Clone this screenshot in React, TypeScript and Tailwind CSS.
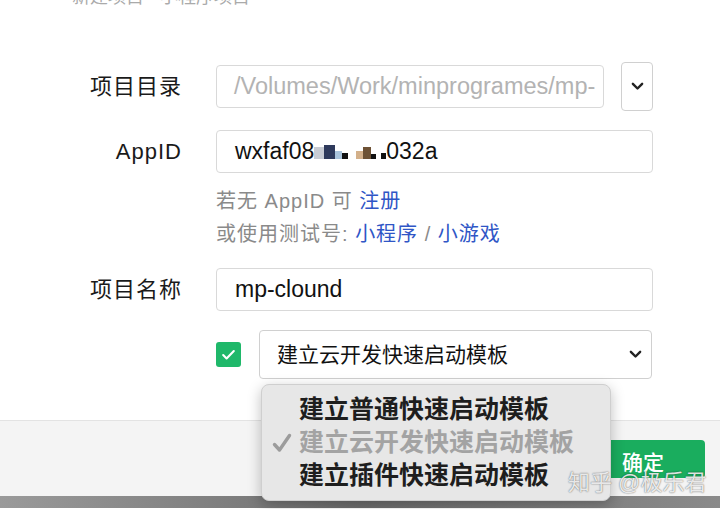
import React from 'react';

const cjk = '"Liberation Sans", "Noto Sans CJK SC", sans-serif';

function Chevron({ className = '' }: { className?: string }) {
  return (
    <svg viewBox="0 0 14 9" className={className} fill="none">
      <path d="M2 2l5 5 5-5" stroke="#222" strokeWidth="2.6" strokeLinecap="round" strokeLinejoin="round" />
    </svg>
  );
}

function Label({ children }: { children: React.ReactNode }) {
  return (
    <div className="w-[182px] shrink-0 text-right text-[22px] tracking-[1px] text-[#1a1a1a]">{children}</div>
  );
}

export default function App() {
  const menuItems = [
    { text: '建立普通快速启动模板', checked: false },
    { text: '建立云开发快速启动模板', checked: true },
    { text: '建立插件快速启动模板', checked: false },
  ];

  return (
    <div className="relative h-[509px] w-[720px] overflow-hidden bg-white" style={{ fontFamily: cjk }}>
      {/* cut-off heading */}
      <div className="flex h-[6px] items-end overflow-hidden pl-[72px]">
        <div className="text-[18px] leading-[18px] text-[#aaa]">新建项目 · 小程序项目</div>
      </div>

      <div className="flex flex-col pt-[56px]">
        <div className="flex h-[49px] items-center">
          <Label>项目目录</Label>
          <div className="ml-[34px] flex h-[43px] w-[388px] items-center overflow-hidden whitespace-nowrap rounded-[4px] border border-[#d9d9d9] pl-[17px] text-[23.5px] text-[#b3b3b3]">
            /Volumes/Work/minprogrames/mp-
          </div>
          <div className="ml-[17px] flex h-[49px] w-[32px] items-center justify-center rounded-[4px] border border-[#d0d0d0]">
            <Chevron className="w-[13px]" />
          </div>
        </div>

        <div className="mt-[19px] flex h-[43px] items-center">
          <Label>AppID</Label>
          <div className="ml-[34px] flex h-[43px] w-[437px] items-center rounded-[4px] border border-[#d9d9d9] pl-[18px] text-[23px] text-[#111]">
            wxfaf08
            <span className="inline-flex w-[72px] items-end">
              <span className="h-[12px] w-[10px] bg-[#c8ccd4]" />
              <span className="h-[14px] w-[12px] bg-[#2e3a5c]" />
              <span className="h-[8px] w-[8px] bg-[#a9c4dc]" />
              <span className="h-[6px] w-[6px] bg-[#111]" />
              <span className="ml-[8px] h-[8px] w-[8px] bg-[#d3b08a]" />
              <span className="h-[12px] w-[8px] bg-[#6e5235]" />
              <span className="h-[5px] w-[5px] bg-[#111]" />
              <span className="ml-[5px] h-[6px] w-[6px] bg-[#111]" />
            </span>
            032a
          </div>
        </div>

        <div className="ml-[216px] mt-[12px] text-[20px] leading-[33px] tracking-[1px] text-[#8a8a8a]">
          <div>
            若无 AppID 可 <span className="text-[#2f56c6]">注册</span>
          </div>
          <div>
            或使用测试号: <span className="text-[#2f56c6]">小程序</span> / <span className="text-[#2f56c6]">小游戏</span>
          </div>
        </div>

        <div className="mt-[17px] flex h-[43px] items-center">
          <Label>项目名称</Label>
          <div className="ml-[34px] flex h-[43px] w-[437px] items-center rounded-[4px] border border-[#d9d9d9] pl-[18px] text-[23px] text-[#111]">
            mp-clound
          </div>
        </div>

        <div className="ml-[216px] mt-[19px] flex h-[49px] items-center">
          <div className="flex h-[25px] w-[25px] items-center justify-center rounded-[3px] bg-[#1fb86a]">
            <svg viewBox="0 0 16 16" className="w-[17px]" fill="none">
              <path d="M3 8.5l3.2 3.2L13 4.8" stroke="white" strokeWidth="2" strokeLinecap="round" strokeLinejoin="round" />
            </svg>
          </div>
          <div className="ml-[18px] flex h-[49px] w-[393px] items-center justify-between rounded-[4px] border border-[#d0d0d0] pl-[17px] pr-[9px] text-[21px] text-[#111]">
            <span>建立云开发快速启动模板</span>
            <Chevron className="w-[13px]" />
          </div>
        </div>
      </div>

      {/* footer */}
      <div className="mt-[41px] flex h-[76px] items-center justify-end border-t border-[#e3e3e3] bg-[#f4f4f4] pr-[15px]">
        <div className="flex h-[38px] w-[124px] items-center justify-center rounded-[4px] bg-[#1aad5e] pt-[8px] text-[21px] font-medium text-white">
          确定
        </div>
      </div>
      <div className="h-[12px] bg-gradient-to-r from-[#9a9a9a] via-[#6e6e6e] to-[#8a8a8a]" />

      {/* dropdown menu */}
      <div className="absolute left-[261px] top-[384px] w-[350px] rounded-[8px] border border-[#cfcfcf] bg-[#e7e7e7] py-[8px] shadow-[0_4px_14px_rgba(0,0,0,0.25)]">
        {menuItems.map((item) => (
          <div
            key={item.text}
            className={`flex h-[33px] items-center text-[25px] font-semibold ${item.checked ? 'text-[#a3a3a3]' : 'text-[#1e1e1e]'}`}
          >
            <span className="flex w-[37px] justify-center pl-[3px]">
              {item.checked && (
                <svg viewBox="0 0 20 20" className="w-[20px]" fill="none">
                  <path d="M2.5 11.5l5 5.5L17.5 2.5" stroke="#9c9c9c" strokeWidth="3.4" strokeLinecap="round" strokeLinejoin="round" />
                </svg>
              )}
            </span>
            <span>{item.text}</span>
          </div>
        ))}
      </div>

      {/* watermark */}
      <div
        className="absolute left-[568px] top-[466px] text-[22px] text-white/85"
        style={{ textShadow: '0 0 1px rgba(0,0,0,0.5), 0 0 2px rgba(0,0,0,0.3)' }}
      >
        知乎 @极乐君
      </div>
    </div>
  );
}
